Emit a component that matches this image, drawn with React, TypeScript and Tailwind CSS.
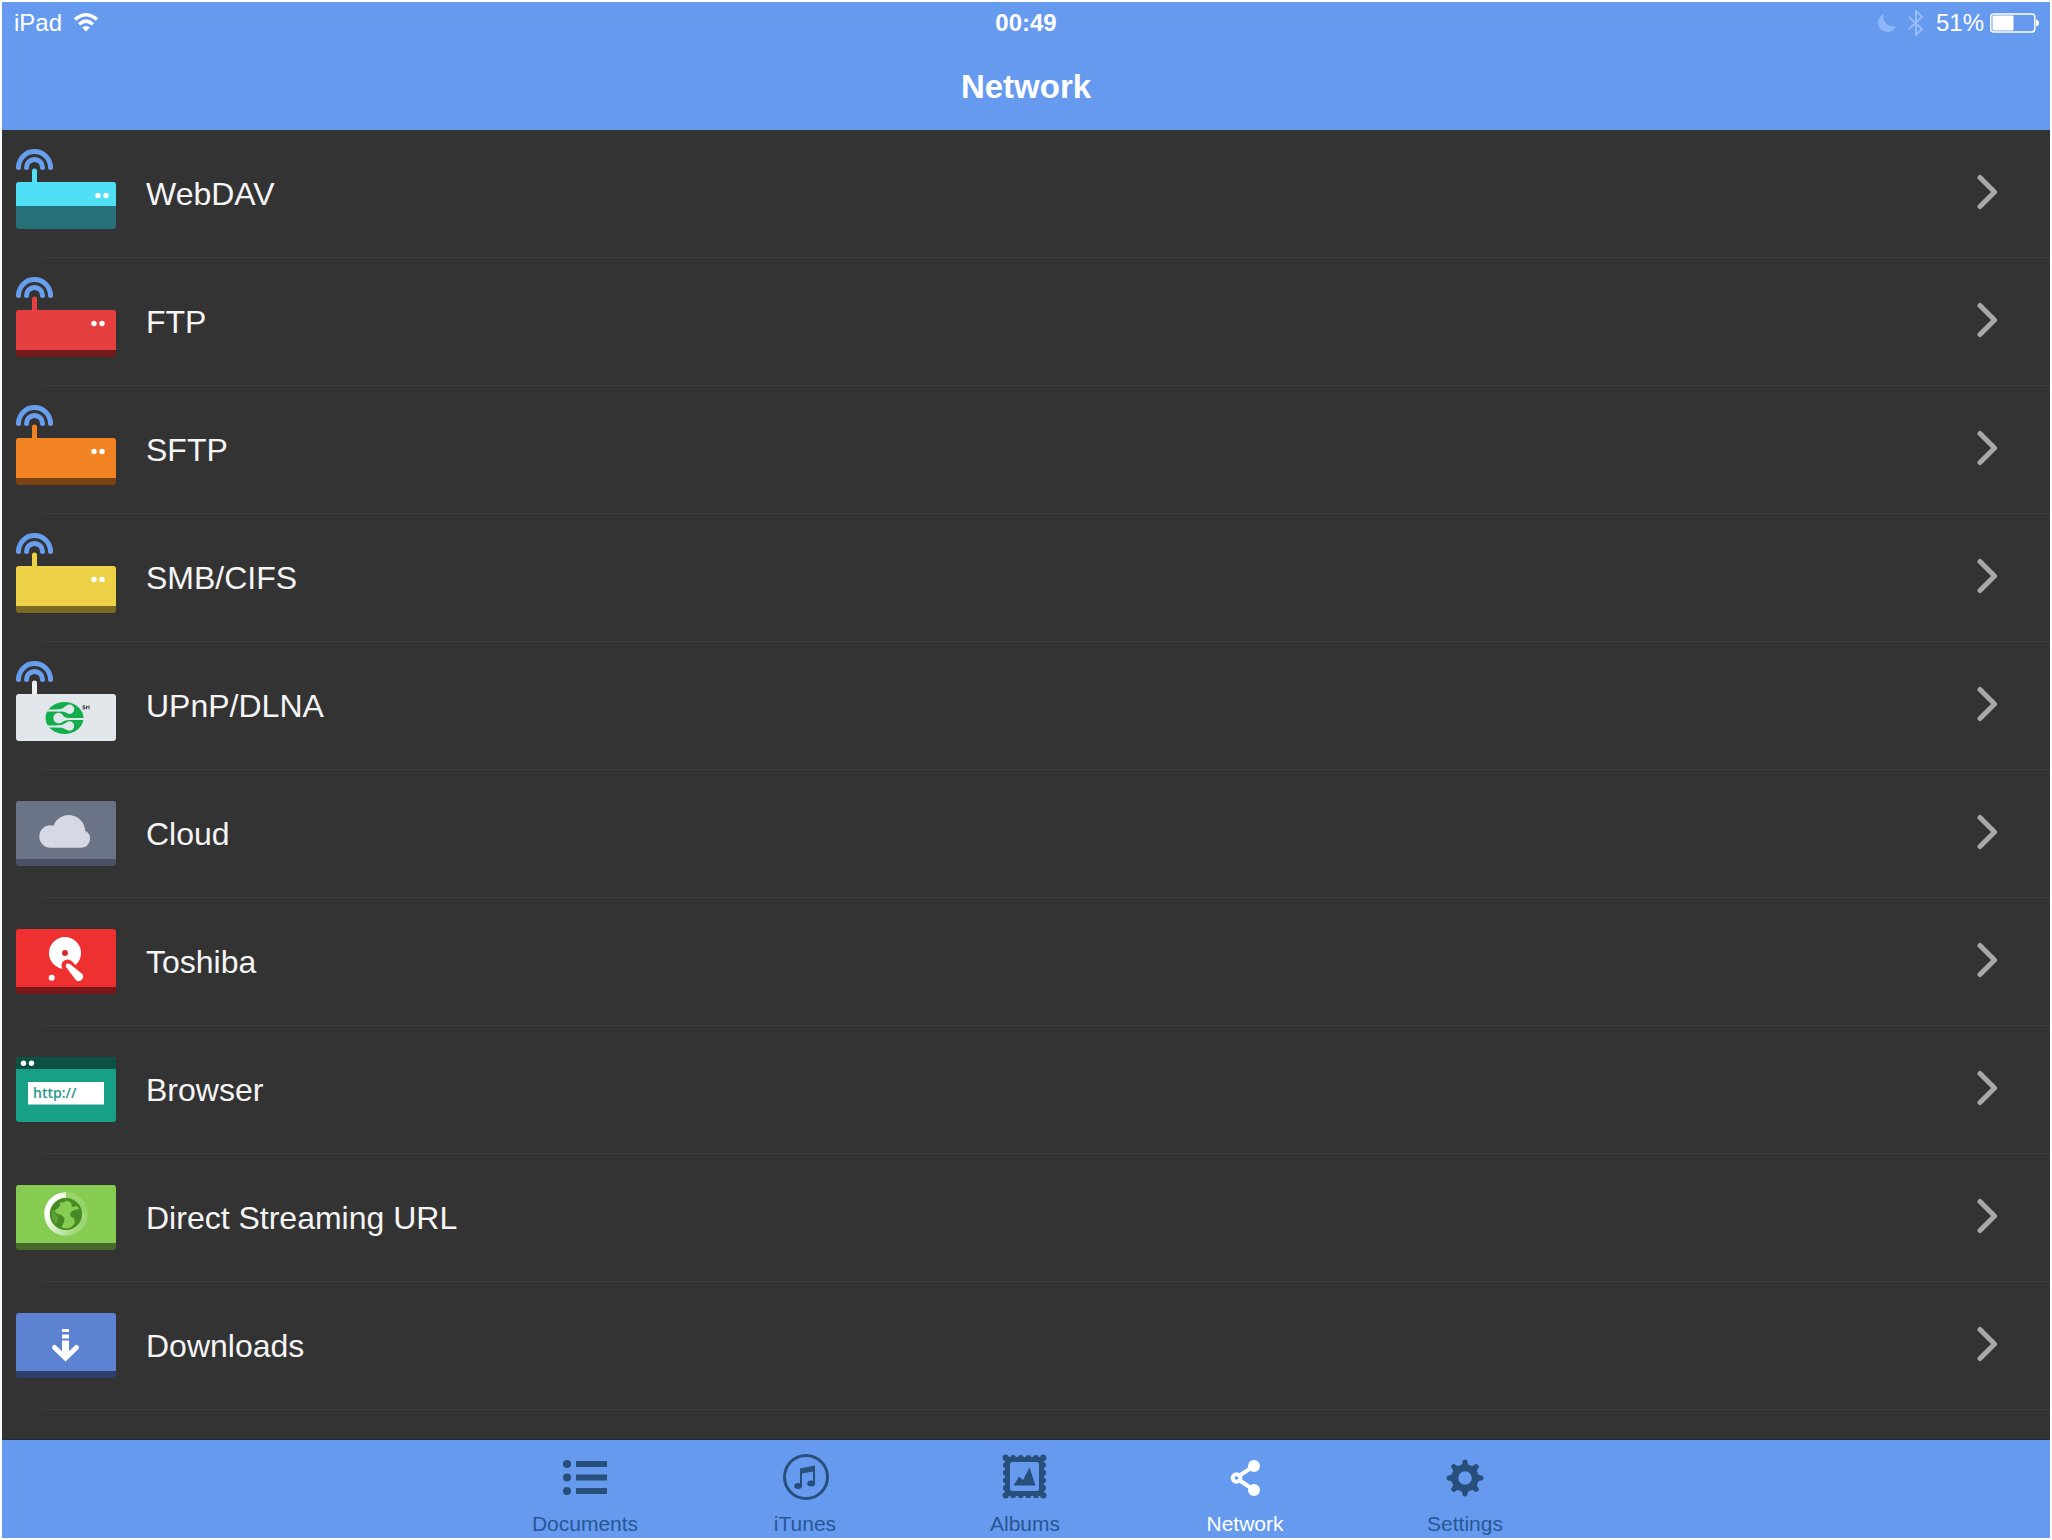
import type { ReactNode } from 'react'

const Antenna = ({ color }: { color: string }) => (
  <>
    <g fill="none" stroke="#679fee" strokeWidth="5" strokeLinecap="round">
      <path d="M2.5 18.5a16 16 0 0 1 32 0" />
      <path d="M10.5 18.5a8 8 0 0 1 16 0" />
    </g>
    <path d="M16 34V22a2.5 2.5 0 0 1 5 0v12z" fill={color} />
  </>
)

const Box = ({ top, color, base, split }: { top: number; color: string; base: string; split: number }) => {
  const bottom = top === 33 ? 80 : 77
  return (
    <>
      <rect y={top} width="100" height={bottom - top} rx="3" fill={base} />
      <path d={`M0 ${split}V${top + 3}a3 3 0 0 1 3-3h94a3 3 0 0 1 3 3V${split}z`} fill={color} />
    </>
  )
}

const Router = ({ color, base, split, dots }: { color: string; base: string; split: number; dots: number }) => (
  <>
    <Antenna color={color} />
    <Box top={33} color={color} base={base} split={split} />
    <circle cx={dots} cy="46.5" r="2.7" fill="#fff" />
    <circle cx={dots + 8} cy="46.5" r="2.7" fill="#fff" />
  </>
)

const rows: { label: string; art: ReactNode }[] = [
  { label: 'WebDAV', art: <Router color="#4fe0f5" base="#27707a" split={57} dots={82} /> },
  { label: 'FTP', art: <Router color="#e53f3f" base="#731a1b" split={73} dots={78} /> },
  { label: 'SFTP', art: <Router color="#f28322" base="#7a4212" split={73} dots={78} /> },
  { label: 'SMB/CIFS', art: <Router color="#edd146" base="#7a6a24" split={73} dots={78} /> },
  {
    label: 'UPnP/DLNA',
    art: (
      <>
        <Antenna color="#eceff1" />
        <rect y="33" width="100" height="47" rx="3" fill="#e1e7ea" />
        <ellipse cx="48.5" cy="57" rx="19" ry="16" fill="#14ad4c" />
        <g stroke="#e1e7ea" fill="none" strokeWidth="1.8">
          <path d="M29 49.5h16M46 58h23M29 65.5h16" />
        </g>
        <g fill="#e1e7ea">
          <path d="M41 48.600q6 0 9-4v7q-4-1.500-9-1.200zM45 53q3 4 9 4.200v1.700q-6 0-9 3zM41 64.600q6 0 9-3v7q-4-2.500-9-2.200z" />
          <circle cx="53.500" cy="48.300" r="4.700" />
          <circle cx="42.500" cy="57" r="5.200" />
          <circle cx="53.500" cy="65" r="4.700" />
        </g>
        <path d="M69 44.800h-2v1.500h2v1.500h-2.500M70.500 48.300v-3.500l1.200 1.500 1.300-1.500v3.500" stroke="#444" strokeWidth="1" fill="none" />
      </>
    ),
  },
  {
    label: 'Cloud',
    art: (
      <>
        <Box top={12} color="#6b7387" base="#4a5065" split={70} />
        <path
          d="M34 58.700a11.200 11.200 0 0 1 0-22.400q1.500 0 3 .5a16.300 16.300 0 0 1 31.600 4.900a9 9 0 0 1-3.600 17z"
          transform="translate(0.5 0)"
          fill="#d6d9e4"
        />
      </>
    ),
  },
  {
    label: 'Toshiba',
    art: (
      <>
        <Box top={12} color="#ee3031" base="#7a1719" split={70} />
        <circle cx="49" cy="36" r="16" fill="#fff" />
        <circle cx="49" cy="36" r="3" fill="#d32f33" />
        <path d="M51.500 48.500L63 60" stroke="#ee3031" strokeWidth="12" strokeLinecap="round" />
        <path d="M50 50q-1-3 1.500-3.500q1.500-.3 3 1l11.500 9.300a4.400 4.400 0 0 1-6.200 6.200z" fill="#fff" />
        <circle cx="35.700" cy="60.700" r="3" fill="#fff" />
      </>
    ),
  },
  {
    label: 'Browser',
    art: (
      <>
        <Box top={12} color="#0b5042" base="#18a087" split={24} />
        <circle cx="7.500" cy="18.300" r="2.700" fill="#fff" />
        <circle cx="15.500" cy="18.300" r="2.700" fill="#fff" />
        <rect x="12" y="37" width="76" height="22.500" fill="#fff" />
        <text x="17" y="53" fontSize="14" fontWeight="600" fontFamily="Open Sans, sans-serif" fill="#27988a">
          http://
        </text>
      </>
    ),
  },
  {
    label: 'Direct Streaming URL',
    art: (
      <>
        <defs>
          <linearGradient id="ring" x1="0" y1="0" x2="1" y2="0.6">
            <stop offset="0.2" stopColor="#fff" />
            <stop offset="1" stopColor="#fff" stopOpacity="0.2" />
          </linearGradient>
        </defs>
        <Box top={12} color="#86cc52" base="#46692b" split={70} />
        <path d="M50 22a19 19 0 0 1 19 19" fill="none" stroke="#fff" strokeOpacity="0.15" strokeWidth="5.500" />
        <path d="M50 22a19 19 0 1 0 19 19" fill="none" stroke="url(#ring)" strokeWidth="5.500" />
        <circle cx="50" cy="41" r="16" fill="#478a25" />
        <path
          d="M47 29.500l4-2 4 2 1 4.500 5-1 2 3-5 1-3 2-1 4 4 2.500 1 4-2 3-3.500 2.500-5 .5-3-1.500 2.500-5 .5-4-3-3-5-1.500-2-3 3-2 3-3-1-3z"
          fill="#86cc52"
        />
        <path d="M35.500 38l2.500-1 1 4 3.500 3-1 5-2 2-3-5z" fill="#86cc52" fillOpacity="0.35" />
      </>
    ),
  },
  {
    label: 'Downloads',
    art: (
      <>
        <Box top={12} color="#5d82d2" base="#2e3f6a" split={70} />
        <path d="M46 28h7v3h-7zM46 33.500h7v4h-7zM46 39.500h7v14h-7z" fill="#fff" />
        <path d="M38.500 46.500l11 10.500 11-10.500" fill="none" stroke="#fff" strokeWidth="5" strokeLinecap="round" />
      </>
    ),
  },
]

const stampNotches = [0, 1, 2, 3, 4, 5]
const teeth = [0, 45, 90, 135, 180, 225, 270, 315]

const tabs: { label: string; icon: ReactNode }[] = [
  {
    label: 'Documents',
    icon: (
      <g fill="#284f7c">
        <circle cx="6" cy="11" r="4" />
        <circle cx="6" cy="24.500" r="4" />
        <circle cx="6" cy="38" r="4" />
        <path d="M15 8h31v6H15zM15 21.500h31v6H15zM15 35h31v6H15z" />
      </g>
    ),
  },
  {
    label: 'iTunes',
    icon: (
      <g fill="#284f7c">
        <circle cx="25" cy="24" r="21.500" fill="none" stroke="#284f7c" strokeWidth="3" />
        <path d="M19 15.500L34 12.500V30h-2V18.500l-11 2V33h-2z" />
        <ellipse cx="17.200" cy="33" rx="4" ry="3" />
        <ellipse cx="30.200" cy="30.500" rx="4" ry="3" />
      </g>
    ),
  },
  {
    label: 'Albums',
    icon: (
      <g>
        <rect x="4" y="4" width="39" height="39" fill="#284f7c" />
        {stampNotches.map((i) => {
          const p = 4.500 + i * 7.600
          return (
            <g key={i} fill="#284f7c">
              <circle cx={p} cy="4.800" r="2.900" />
              <circle cx={p} cy="42.200" r="2.900" />
              <circle cx="4.800" cy={p} r="2.900" />
              <circle cx="42.200" cy={p} r="2.900" />
            </g>
          )
        })}
        <rect x="9" y="9" width="29" height="29" rx="2.500" fill="#669aee" />
        <path d="M12.500 32.500l5.500-9 4 3.500 6.500-12.500 6 18z" fill="#284f7c" />
      </g>
    ),
  },
  {
    label: 'Network',
    icon: (
      <g stroke="#fff" fill="#fff">
        <path d="M15 25L33 13M15 25L33 37" strokeWidth="4" />
        <circle cx="33" cy="13" r="6" stroke="none" />
        <circle cx="33" cy="37" r="6" stroke="none" />
        <circle cx="15.500" cy="25" r="3.800" strokeWidth="4" fill="#669aee" />
      </g>
    ),
  },
  {
    label: 'Settings',
    icon: (
      <g>
        {teeth.map((a) => (
          <path
            key={a}
            d="M18.500 13.500Q21.500 12 21.500 8.500q0-2 2.500-2t2.500 2q0 3.500 3 5z"
            fill="#284f7c"
            transform={`rotate(${a} 24 25)`}
          />
        ))}
        <circle cx="24" cy="25" r="10.300" fill="none" stroke="#284f7c" strokeWidth="7" />
      </g>
    ),
  },
]

export default function App() {
  return (
    <div className="flex min-h-screen flex-col border-2 border-white bg-[#333333] font-['Liberation_Sans',sans-serif]">
      <header className="bg-[#669aee] pt-[7px] pb-[23px] text-white">
        <div className="grid grid-cols-3 items-center px-3 text-2xl leading-7">
          <div className="flex items-center gap-3">
            <span>iPad</span>
            <svg width="24" height="20" viewBox="0 0 24 20" role="img" aria-label="Wi-Fi">
              <g fill="none" stroke="#fff" strokeWidth="3.400">
                <path d="M1 6.500Q12-3 23 6.500" />
                <path d="M5 11.300Q12 5 19 11.300" />
              </g>
              <path d="M8.200 14.500q3.800-3 7.600 0L12 18.500z" fill="#fff" />
            </svg>
          </div>
          <time className="text-center font-bold">00:49</time>
          <div className="flex items-center justify-end">
            <svg className="mr-3" width="18" height="20" viewBox="0 0 18 20" aria-hidden="true">
              <path d="M6 1a9.300 9.300 0 1 0 12 12A9.500 9.500 0 0 1 6 1z" fill="#8db7f6" />
            </svg>
            <svg className="mr-3" width="16" height="26" viewBox="0 0 16 26" aria-hidden="true">
              <path d="M1 7l13 12-6 6V1l6 6L1 19" fill="none" stroke="#98bdf8" strokeWidth="2" />
            </svg>
            <span className="mr-1.5">51%</span>
            <svg className="-mr-0.5" width="50" height="20" viewBox="0 0 50 20" role="img" aria-label="Battery">
              <rect x="0.750" y="1" width="44" height="18" rx="3" fill="none" stroke="#fff" strokeWidth="1.500" />
              <rect x="2.500" y="2.500" width="21" height="15" rx="1" fill="#fff" />
              <path d="M46 6.500q3 1 3 3.500t-3 3.500z" fill="#fff" />
            </svg>
          </div>
        </div>
        <h1 className="mt-[30px] text-center text-[33px] leading-10 font-bold">Network</h1>
      </header>

      <main className="flex-1">
        <ul>
          {rows.map((row) => (
            <li key={row.label}>
              <a href="#" className="relative flex h-32 items-center pr-[50px] pl-[14px] text-[#f5f5f5]">
                <svg width="100" height="90" viewBox="0 0 100 90" aria-hidden="true">
                  {row.art}
                </svg>
                <span className="ml-[30px] flex-1 text-[32px] leading-10">{row.label}</span>
                <svg width="24" height="40" viewBox="0 0 24 40" aria-hidden="true">
                  <path
                    d="M4 3.500L18.500 18L4 32.500"
                    fill="none"
                    stroke="#a8a8a8"
                    strokeWidth="5"
                    strokeLinecap="round"
                    strokeLinejoin="round"
                  />
                </svg>
                <span className="absolute right-0 bottom-0 left-10 h-px bg-[#3c3c3c]" />
              </a>
            </li>
          ))}
        </ul>
      </main>

      <nav className="flex justify-center border-t border-[#1d2c44] bg-[#669aee] pr-0.5">
        {tabs.map((tab) => (
          <button
            key={tab.label}
            type="button"
            className={
              tab.label === 'Network'
                ? 'flex w-[220px] flex-col items-center pt-[13px] pb-0.5 text-white'
                : 'flex w-[220px] flex-col items-center pt-[13px] pb-0.5 text-[#275795]'
            }
          >
            <svg width="48" height="48" viewBox="0 0 48 48" aria-hidden="true">
              {tab.icon}
            </svg>
            <span className="mt-[11px] text-[21px] leading-6">{tab.label}</span>
          </button>
        ))}
      </nav>
    </div>
  )
}
